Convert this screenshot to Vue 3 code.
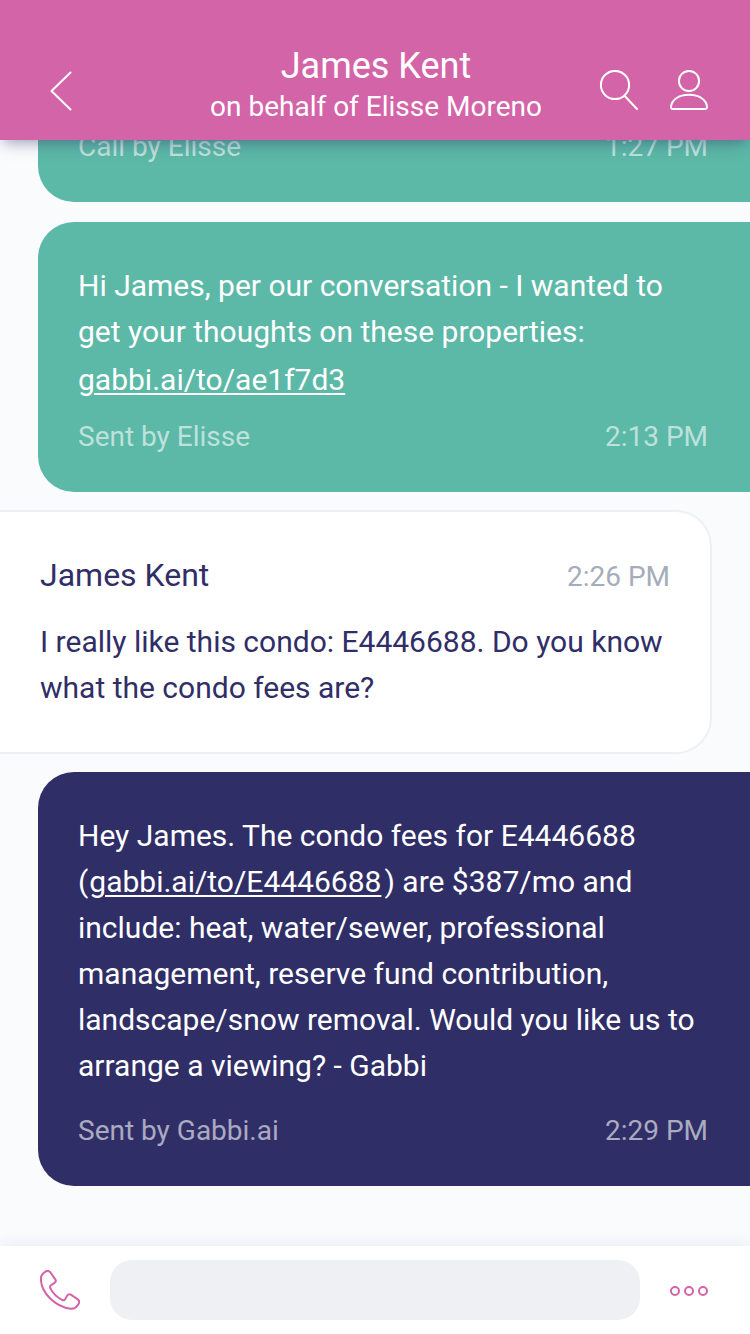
<template>
    <div class="screen">
        <header class="header">
            <button class="icon-button" aria-label="Back">
                <svg width="24" height="42" viewBox="0 0 24 42">
                    <path d="M22.5 2.5L3.5 21L22.5 39.5" />
                </svg>
            </button>
            <div class="heading">
                <h1>James Kent</h1>
                <p>on behalf of Elisse Moreno</p>
            </div>
            <div class="actions">
                <button class="icon-button" aria-label="Search">
                    <svg width="40" height="42" viewBox="0 0 40 42">
                        <circle cx="16" cy="15" r="14.1" />
                        <path d="M25.5 25.8L38 39" />
                    </svg>
                </button>
                <button class="icon-button" aria-label="Profile">
                    <svg width="40" height="42" viewBox="0 0 40 42">
                        <circle cx="20" cy="11" r="10.1" />
                        <path d="M4 39H36Q38.2 39 38 36.6C37.4 30 30.5 24.8 20 24.8S2.6 30 2 36.6Q1.8 39 4 39Z" />
                    </svg>
                </button>
            </div>
        </header>

        <main class="messages">
            <section v-for="message in messages" :key="message.id" class="bubble" :class="message.type">
                <div v-if="message.name" class="sender">
                    <h2>{{ message.name }}</h2>
                    <time>{{ message.time }}</time>
                </div>
                <p v-for="(line, i) in message.lines" :key="i" class="line" :class="{ 'link-line': line.linkOnly }">
                    {{ line.text }}<a v-if="line.link">{{ line.link }}</a>{{ line.after }}
                </p>
                <div v-if="message.via" class="meta">
                    <span>{{ message.via }}</span>
                    <time>{{ message.time }}</time>
                </div>
            </section>
        </main>

        <footer class="composer">
            <button class="icon-button" aria-label="Call">
                <svg width="40" height="40" viewBox="0 0 40 40">
                    <path d="M5 1.8Q8.5-.2 10.5 2.5L15.3 9.4Q16.6 11.4 14.6 12.8L11.2 15Q9.4 16.4 10.5 18.6C13 23.4 17 27.2 22 29.9Q24 31 25.2 29.1L27.3 25.6Q28.6 23.5 30.8 24.7L37.5 29.2Q40.2 31.1 38.7 33.7Q35.5 39.2 31 38.8C14.5 36.8.8 22 .9 8.5Q1 4.5 5 1.8Z" />
                </svg>
            </button>
            <input class="message-input" type="text" aria-label="Message">
            <button class="icon-button" aria-label="More">
                <svg width="38" height="12" viewBox="0 0 38 12">
                    <circle cx="5" cy="7" r="4" />
                    <circle cx="19" cy="7" r="4" />
                    <circle cx="33" cy="7" r="4" />
                </svg>
            </button>
        </footer>
    </div>
</template>

<script setup>
const messages = [
    { id: 1, type: 'sent', lines: [], via: 'Call by Elisse', time: '1:27 PM' },
    {
        id: 2,
        type: 'sent',
        lines: [
            { text: 'Hi James, per our conversation - I wanted to' },
            { text: 'get your thoughts on these properties:' },
            { link: 'gabbi.ai/to/ae1f7d3', linkOnly: true },
        ],
        via: 'Sent by Elisse',
        time: '2:13 PM',
    },
    {
        id: 3,
        type: 'received',
        name: 'James Kent',
        lines: [
            { text: 'I really like this condo: E4446688. Do you know' },
            { text: 'what the condo fees are?' },
        ],
        time: '2:26 PM',
    },
    {
        id: 4,
        type: 'auto',
        lines: [
            { text: 'Hey James. The condo fees for E4446688' },
            { text: '(', link: 'gabbi.ai/to/E4446688', after: ') are $387/mo and' },
            { text: 'include: heat, water/sewer, professional' },
            { text: 'management, reserve fund contribution,' },
            { text: 'landscape/snow removal. Would you like us to' },
            { text: 'arrange a viewing? - Gabbi' },
        ],
        via: 'Sent by Gabbi.ai',
        time: '2:29 PM',
    },
];
</script>

<style>
body {
    background: #fafbfd;
}
</style>

<style scoped>
* {
    box-sizing: border-box;
}

h1,
h2,
p {
    margin: 0;
    font-weight: 400;
}

.screen {
    display: flex;
    flex-direction: column;
    height: 1334px;
    overflow: hidden;
    background: #fafbfd;
    font-family: Roboto, "Liberation Sans", sans-serif;
}

svg {
    display: block;
    fill: none;
    stroke: currentColor;
    stroke-width: 2;
    stroke-linecap: round;
    stroke-linejoin: round;
}

.icon-button {
    padding: 0;
    border: none;
    background: transparent;
    color: inherit;
}

.header {
    display: grid;
    grid-template-columns: 155px 1fr 160px;
    flex: none;
    height: 140px;
    padding: 46px 41px 0 48px;
    background: #d464a8;
    color: #fff;
    box-shadow: 0 6px 14px -4px rgba(47, 45, 103, 0.5);
    z-index: 1;
}

.header .icon-button {
    justify-self: start;
    align-self: start;
    margin-top: 24px;
}

.heading {
    text-align: center;
    white-space: nowrap;
}

.heading h1 {
    font-size: 36px;
    line-height: 40px;
}

.heading p {
    font-size: 28px;
    line-height: 42px;
}

.actions {
    display: flex;
    justify-content: flex-end;
    gap: 30px;
}

.messages {
    display: flex;
    flex: 1;
    flex-direction: column;
    justify-content: flex-end;
    gap: 20px;
    min-height: 0;
    padding-bottom: 60px;
    overflow: hidden;
}

.bubble {
    flex: none;
    margin-left: 38px;
    padding: 41px 42px 39px 40px;
    border-radius: 36px 0 0 36px;
    background: #5cb8a7;
    color: #fff;
}

.auto {
    background: #302e67;
}

.received {
    height: 244px;
    margin: -2px 38px -2px 0;
    padding: 44px 40px 0;
    border: 2px solid #eff0f3;
    border-left: none;
    border-radius: 0 36px 36px 0;
    background: #fff;
    color: #302e67;
}

.line {
    font-size: 30px;
    line-height: 46px;
    white-space: nowrap;
}

.link-line {
    padding-top: 2px;
}

.line a {
    margin: 0 3px 0 1px;
    text-decoration: underline;
    text-decoration-thickness: 2px;
    text-underline-offset: 3px;
}

.link-line a {
    margin: 0;
}

.sender,
.meta {
    display: flex;
    justify-content: space-between;
    font-size: 28px;
    line-height: 32px;
}

.sender {
    align-items: baseline;
    margin-bottom: 25px;
}

.sender h2 {
    font-size: 32px;
    line-height: 38px;
}

.sender time {
    color: #a5adbb;
}

.meta {
    margin-top: 18px;
    color: rgba(255, 255, 255, 0.6);
}

.auto .meta {
    margin-top: 26px;
}

.composer {
    display: flex;
    flex: none;
    align-items: center;
    gap: 30px;
    height: 88px;
    padding: 0 42px 0 40px;
    background: #fff;
    color: #d464a8;
    box-shadow: 0 -2px 14px rgba(47, 45, 103, 0.08);
    z-index: 1;
}

.message-input {
    flex: 1;
    min-width: 0;
    height: 60px;
    border: none;
    border-radius: 22px;
    background: #eff0f3;
}
</style>
